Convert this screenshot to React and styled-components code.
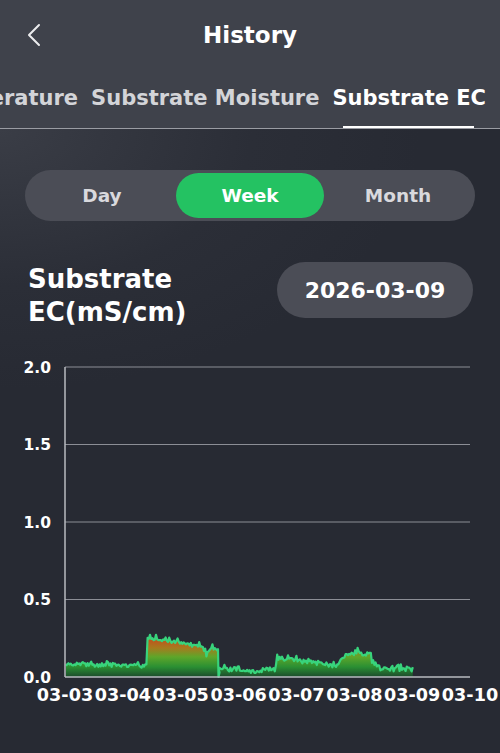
import React from "react";
import styled, { createGlobalStyle } from "styled-components";

const FONT = `"DejaVu Sans", "Liberation Sans", sans-serif`;

const GlobalStyle = createGlobalStyle`
    html, body {
        margin: 0;
        padding: 0;
        background: #272a33;
    }
    body {
        font-family: ${FONT};
        -webkit-font-smoothing: antialiased;
    }
`;

const Page = styled.div`
    width: 500px;
    min-height: 753px;
    overflow: hidden;
    background: radial-gradient(ellipse 420px 260px at 0px 130px, #3a3d46 0%, #2b2e37 60%, #272a33 100%);
    color: #fff;
`;

const Top = styled.div`
    background: #3f424b;
`;

const Header = styled.div`
    height: 70px;
    display: grid;
    grid-template-columns: 70px 1fr 70px;
    align-items: center;
`;

const BackButton = styled.button`
    border: 0;
    background: none;
    padding: 0 0 0 27px;
    height: 40px;
    display: flex;
    align-items: center;
    cursor: pointer;
`;

const Title = styled.h1`
    margin: 0;
    text-align: center;
    font-size: 23px;
    font-weight: 700;
    color: #fff;
`;

const TabsRow = styled.div`
    height: 58px;
    display: flex;
    justify-content: flex-end;
    align-items: stretch;
    gap: 13px;
    padding-right: 14px;
    overflow: hidden;
    border-bottom: 1px solid #9a9ca3;
`;

const Tab = styled.div`
    position: relative;
    flex-shrink: 0;
    display: flex;
    align-items: center;
    padding-bottom: 2px;
    font-size: 21px;
    font-weight: 700;
    white-space: nowrap;
    color: ${p => (p.$active ? "#ffffff" : "#d3d4d8")};

    &::after {
        content: "";
        display: ${p => (p.$active ? "block" : "none")};
        position: absolute;
        left: 11px;
        right: 12px;
        bottom: -1px;
        height: 3px;
        background: #ffffff;
    }
`;

const Body = styled.div`
    padding: 41px 25px 0;
`;

const Segmented = styled.div`
    height: 51px;
    box-sizing: border-box;
    padding: 3px;
    border-radius: 26px;
    background: #4b4d56;
    display: grid;
    grid-template-columns: repeat(3, 1fr);
`;

const Segment = styled.div`
    border-radius: 23px;
    display: flex;
    align-items: center;
    justify-content: center;
    font-size: 18.5px;
    font-weight: 700;
    color: ${p => (p.$active ? "#ffffff" : "#d9d9dd")};
    background: ${p => (p.$active ? "#24c262" : "transparent")};
`;

const TitleRow = styled.div`
    margin-top: 41px;
    padding: 0 2px 0 3px;
    display: flex;
    justify-content: space-between;
    align-items: flex-start;
`;

const ChartTitle = styled.div`
    font-size: 26px;
    font-weight: 700;
    line-height: 33px;
    padding-top: 1px;
`;

const DatePill = styled.div`
    width: 196px;
    height: 56px;
    border-radius: 28px;
    background: #4b4d56;
    display: flex;
    align-items: center;
    justify-content: center;
    font-size: 22px;
    font-weight: 700;
`;

const ChartWrap = styled.div`
    margin-top: 21px;
`;

// chart geometry (svg coords)
const X0 = 65;
const X1 = 470;
const Y0 = 327; // value 0.0
const PER = 155; // px per 1.0
const yOf = v => Y0 - v * PER;

function rng(seed) {
    let s = seed;
    return () => {
        s = (s * 16807) % 2147483647;
        return (s - 1) / 2147483646;
    };
}

function baseAt(x) {
    if (x < 147) return 0.085 - (x - 66) * 0.0002;
    if (x < 218) {
        if (x >= 203 && x <= 210) return 0.14 + Math.abs(x - 206.5) * 0.012;
        return 0.255 - (x - 147) * 0.0011;
    }
    if (x < 276) return x > 250 && x < 262 ? 0.035 : 0.05;
    if (x < 336) return 0.125 - (x - 276) * 0.0009;
    if (x < 346) return 0.075 + (x - 336) * 0.007;
    if (x < 371) return 0.145 + (x > 355 && x < 362 ? 0.015 : 0);
    if (x < 380) return 0.08;
    return 0.05;
}

function buildData() {
    const r = rng(4217);
    const pts = [];
    for (let x = 66; x <= 413; x += 1.2) {
        const amp = x < 147 ? 0.026 : x < 218 ? 0.022 : 0.028;
        let v = baseAt(x) + (r() - 0.5) * amp;
        if (r() > 0.9) v += 0.02;
        pts.push([x, v]);
    }
    // sharp drop at the end of day 2
    const i = pts.findIndex(p => p[0] >= 218);
    pts.splice(i, 0, [218, 0.18], [218.5, 0.0], [219.5, 0.03]);
    return pts;
}

const DATA = buildData();
const TICKS = ["03-03", "03-04", "03-05", "03-06", "03-07", "03-08", "03-09", "03-10"];

function Chart() {
    const line = DATA.map((p, i) => `${i ? "L" : "M"}${p[0].toFixed(1)} ${yOf(p[1]).toFixed(1)}`).join(" ");
    const area = `${line} L${DATA[DATA.length - 1][0]} ${Y0} L${DATA[0][0]} ${Y0} Z`;
    const step = (X1 - X0) / 7;

    return (
        <svg width="500" height="362" viewBox="0 0 500 362">
            <defs>
                <linearGradient id="ecFill" gradientUnits="userSpaceOnUse" x1="0" y1={yOf(0.26)} x2="0" y2={Y0}>
                    <stop offset="0" stopColor="#c9461c" />
                    <stop offset="0.28" stopColor="#a67a1e" />
                    <stop offset="0.5" stopColor="#5ea62a" />
                    <stop offset="0.75" stopColor="#2a8f33" />
                    <stop offset="1" stopColor="#1c4a2c" />
                </linearGradient>
            </defs>
            {[0.5, 1, 1.5, 2].map(v => (
                <line key={v} x1={X0} x2={X1} y1={yOf(v)} y2={yOf(v)} stroke="#8c8e96" strokeWidth="1.2" />
            ))}
            <path d={area} fill="url(#ecFill)" />
            <path d={line} fill="none" stroke="#38d47c" strokeWidth="2.2" strokeLinejoin="round" />
            <line x1={X0} x2={X0} y1={yOf(2)} y2={Y0} stroke="#b9bbc1" strokeWidth="1.5" />
            <line x1={X0} x2={X1} y1={Y0} y2={Y0} stroke="#b9bbc1" strokeWidth="1.5" />
            {[0, 0.5, 1, 1.5, 2].map(v => (
                <text
                    key={v}
                    x="51"
                    y={yOf(v) + 5.5}
                    textAnchor="end"
                    fill="#ffffff"
                    fontSize="15.5"
                    fontWeight="700"
                    fontFamily={FONT}
                >
                    {v.toFixed(1)}
                </text>
            ))}
            {TICKS.map((t, i) => (
                <text
                    key={t}
                    x={X0 + i * step}
                    y={Y0 + 24}
                    textAnchor="middle"
                    fill="#ffffff"
                    fontSize="17.6"
                    fontWeight="700"
                    fontFamily={FONT}
                >
                    {t}
                </text>
            ))}
        </svg>
    );
}

function BackIcon() {
    return (
        <svg width="14" height="24" viewBox="0 0 14 24">
            <polyline points="12,2 2,12 12,22" fill="none" stroke="#ececee" strokeWidth="2" strokeLinecap="round" strokeLinejoin="round" />
        </svg>
    );
}

export default function App() {
    const tabs = ["Substrate Temperature", "Substrate Moisture", "Substrate EC"];
    const ranges = ["Day", "Week", "Month"];

    return (
        <Page>
            <GlobalStyle />
            <Top>
                <Header>
                    <BackButton aria-label="Back">
                        <BackIcon />
                    </BackButton>
                    <Title>History</Title>
                    <div />
                </Header>
                <TabsRow>
                    {tabs.map(t => (
                        <Tab key={t} $active={t === "Substrate EC"}>{t}</Tab>
                    ))}
                </TabsRow>
            </Top>
            <Body>
                <Segmented>
                    {ranges.map(r => (
                        <Segment key={r} $active={r === "Week"}>{r}</Segment>
                    ))}
                </Segmented>
                <TitleRow>
                    <ChartTitle>
                        Substrate
                        <br />
                        EC(mS/cm)
                    </ChartTitle>
                    <DatePill>2026-03-09</DatePill>
                </TitleRow>
            </Body>
            <ChartWrap>
                <Chart />
            </ChartWrap>
        </Page>
    );
}
